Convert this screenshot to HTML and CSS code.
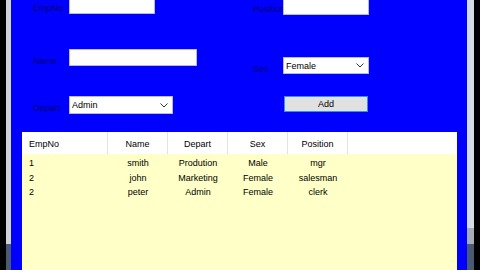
FILE: index.html
```html
<!DOCTYPE html>
<html lang="en">

<head>
    <meta charset="UTF-8">
    <meta name="viewport" content="width=device-width, initial-scale=1.0">
    <link rel="stylesheet" href="styles.css">
</head>

<body>
    <div class="edge"></div>
    <div class="strip left">
        <div class="strip-fill"></div>
        <div class="strip-dark"></div>
    </div>

    <div class="main">
        <div class="form">
            <div class="col col-left">
                <div class="field first">
                    <span class="label">EmpNo</span>
                    <div class="input w86 h18"></div>
                </div>
                <div class="field name">
                    <span class="label">Name</span>
                    <div class="input w128 h17"></div>
                </div>
                <div class="field depart">
                    <span class="label">Depart</span>
                    <div class="select w104 h18">
                        <span>Admin</span>
                        <svg width="8" height="5" viewBox="0 0 8 5"><polyline points="0.5,0.5 4,4 7.5,0.5" fill="none" stroke="#333" stroke-width="1"/></svg>
                    </div>
                </div>
            </div>
            <div class="col col-right">
                <div class="field first">
                    <span class="label">Position</span>
                    <div class="input w86 h19"></div>
                </div>
                <div class="field sex">
                    <span class="label">Sex</span>
                    <div class="select w86 h17">
                        <span>Female</span>
                        <svg width="8" height="5" viewBox="0 0 8 5"><polyline points="0.5,0.5 4,4 7.5,0.5" fill="none" stroke="#333" stroke-width="1"/></svg>
                    </div>
                </div>
                <div class="field add">
                    <button class="btn">Add</button>
                </div>
            </div>
        </div>

        <div class="grid">
            <div class="grid-head">
                <div class="cell c1">EmpNo</div>
                <div class="cell c2">Name</div>
                <div class="cell c2">Depart</div>
                <div class="cell c2">Sex</div>
                <div class="cell c2">Position</div>
            </div>
            <div class="grid-body">
                <div class="row">
                    <div class="cell c1">1</div>
                    <div class="cell c2">smith</div>
                    <div class="cell c2">Prodution</div>
                    <div class="cell c2">Male</div>
                    <div class="cell c2">mgr</div>
                </div>
                <div class="row">
                    <div class="cell c1">2</div>
                    <div class="cell c2">john</div>
                    <div class="cell c2">Marketing</div>
                    <div class="cell c2">Female</div>
                    <div class="cell c2">salesman</div>
                </div>
                <div class="row">
                    <div class="cell c1">2</div>
                    <div class="cell c2">peter</div>
                    <div class="cell c2">Admin</div>
                    <div class="cell c2">Female</div>
                    <div class="cell c2">clerk</div>
                </div>
            </div>
        </div>
    </div>

    <div class="strip right">
        <div class="strip-fill"></div>
        <div class="strip-mid"></div>
        <div class="strip-dark"></div>
    </div>
    <div class="edge"></div>
</body>

</html>
```

FILE: styles.css
```css
body {
    margin: 0;
    width: 480px;
    height: 270px;
    overflow: hidden;
    display: flex;
    background-color: #000;
    font-family: "Liberation Sans", Arial, sans-serif;
    font-size: 9px;
    color: #000;
}

.edge {
    width: 6px;
    background-color: #000;
}

.strip {
    width: 5px;
    display: flex;
    flex-direction: column;
    background-color: #cfd4da;
}

.strip.right {
    width: 7px;
    background-color: #d6dce4;
}

.strip-fill {
    flex: 1;
}

.strip-mid {
    height: 16px;
    background-color: #a7adb6;
}

.strip-dark {
    height: 26px;
    background-color: #4b5a73;
}

.main {
    flex: 1;
    background-color: #0000ff;
    display: flex;
    flex-direction: column;
    padding-right: 10px;
}

.form {
    height: 132px;
    display: flex;
    padding-left: 22px;
}

.col {
    display: flex;
    flex-direction: column;
}

.col-left {
    width: 220px;
}

.field {
    display: flex;
    align-items: center;
}

.field.first {
    margin-top: -4px;
}

.col-left .field.name {
    margin-top: 35px;
}

.col-left .field.depart {
    margin-top: 30px;
}

.col-right .field.sex {
    margin-top: 42px;
}

.col-right .field.add {
    margin-top: 22px;
    padding-left: 31px;
}

.label {
    color: #000070;
    margin-top: 6px;
    white-space: nowrap;
}

.col-left .label {
    width: 36px;
}

.col-right .label {
    width: 30px;
}

.input,
.select {
    box-sizing: border-box;
    background-color: #fff;
    border: 1px solid #b8b8f0;
}

.select {
    display: flex;
    align-items: center;
    justify-content: space-between;
    padding: 0 4px 0 2px;
}

.w86 { width: 86px; }
.w104 { width: 104px; }
.w128 { width: 128px; }
.h17 { height: 17px; }
.h18 { height: 18px; }
.h19 { height: 19px; }

.btn {
    box-sizing: border-box;
    width: 84px;
    height: 16px;
    padding: 0;
    background-color: #e1e1e1;
    border: 1px solid #3a8ee6;
    font-family: inherit;
    font-size: 9px;
    color: #000;
}

.grid {
    flex: 1;
    margin-left: 11px;
    background-color: #ffffc8;
}

.grid-head {
    height: 22px;
    display: flex;
    background-color: #fff;
}

.grid-head .cell {
    height: 22px;
    padding-top: 2px;
    line-height: 20px;
    border-right: 1px solid #e3e3e3;
}

.grid-body {
    padding-top: 2px;
}

.row {
    display: flex;
    height: 14.5px;
    line-height: 14.5px;
}

.cell {
    box-sizing: border-box;
    white-space: nowrap;
}

.c1 {
    width: 86px;
    padding-left: 7px;
}

.c2 {
    width: 60px;
    text-align: center;
}
```
